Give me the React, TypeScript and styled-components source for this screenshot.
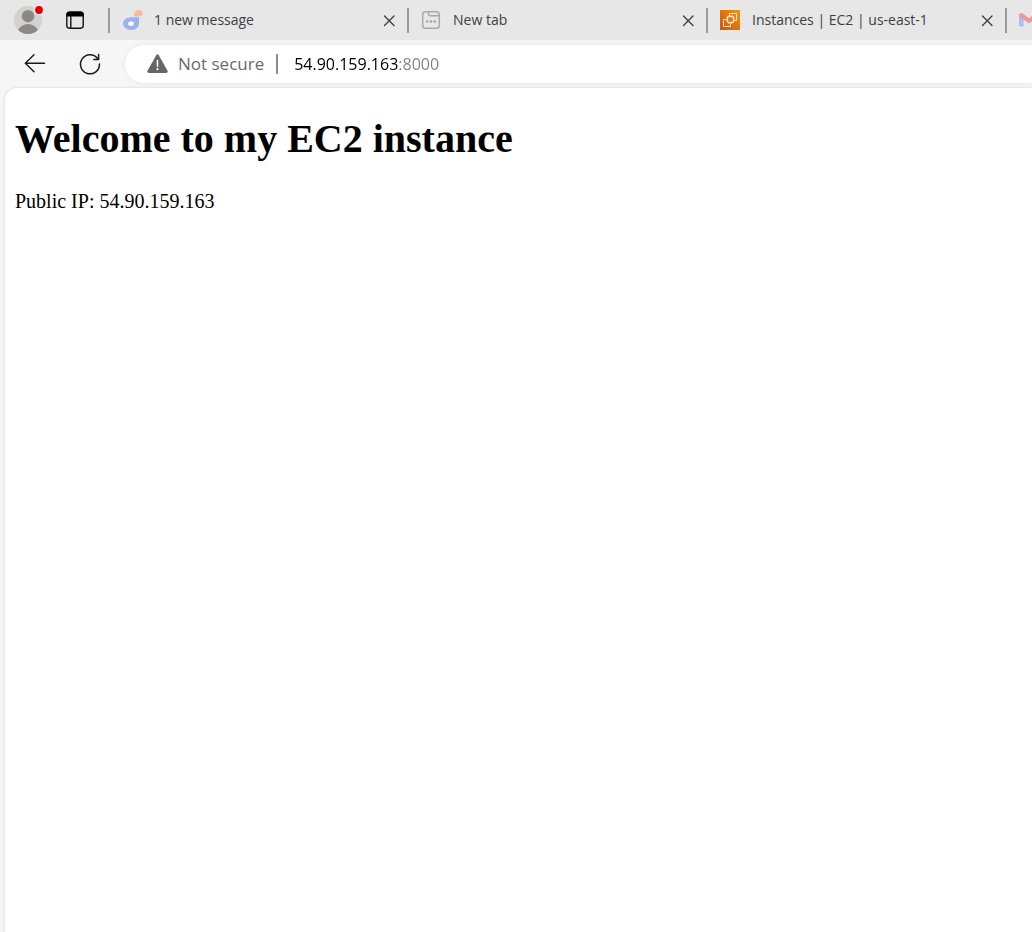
import React, { useState } from "react";
import styled, { createGlobalStyle } from "styled-components";

const uiFont = `"Open Sans", "Noto Sans", sans-serif`;

const GlobalStyle = createGlobalStyle`
  * { box-sizing: border-box; }
  body { margin: 0; background: #f6f6f6; }
`;

const Browser = styled.div`
  display: flex;
  flex-direction: column;
  min-height: 100vh;
  overflow: hidden;
  background: #f6f6f6;
  font-family: ${uiFont};
`;

const TabStrip = styled.header`
  display: flex;
  align-items: center;
  height: 40px;
  overflow: hidden;
  background: #e7e7e7;
`;

const IconButton = styled.button<{ $size?: number }>`
  display: flex;
  flex: none;
  align-items: center;
  justify-content: center;
  width: ${(p) => p.$size ?? 40}px;
  height: ${(p) => p.$size ?? 40}px;
  padding: 0;
  border: 0;
  background: transparent;
  color: #1a1a1a;
`;

const WindowButtons = styled.div`
  display: flex;
  flex: none;
  gap: 7px;
  width: 108px;
  padding-left: 8px;
`;

const Tabs = styled.nav`
  display: flex;
  flex: 1;
  min-width: 0;
  overflow: hidden;
`;

const Tab = styled.div`
  display: flex;
  flex: none;
  align-items: center;
  width: 299px;
  height: 25px;
  padding-right: 8px;
  border-left: 2px solid #9a9a9a;
`;

const TabButton = styled.button`
  display: flex;
  flex: 1;
  align-items: center;
  gap: 12px;
  min-width: 0;
  padding: 0 0 0 12px;
  border: 0;
  background: transparent;
  color: #404040;
  font-family: ${uiFont};
  font-size: 14px;
  line-height: 24px;
  text-align: left;
  white-space: nowrap;

  svg { flex: none; }
`;

const Toolbar = styled.div`
  display: flex;
  align-items: center;
  height: 48px;
  padding-left: 15px;
  gap: 15px;
`;

const AddressBar = styled.form`
  display: flex;
  flex: 1;
  align-items: center;
  min-width: 0;
  height: 38px;
  padding-left: 22px;
  border-radius: 19px 0 0 19px;
  background: #ffffff;
  box-shadow: 0 0 4px rgba(0, 0, 0, 0.08);
`;

const SecurityButton = styled.button`
  display: flex;
  flex: none;
  align-items: center;
  gap: 10px;
  padding: 0;
  border: 0;
  background: transparent;
  color: #6b6b6b;
  font-family: ${uiFont};
  font-size: 17px;
  line-height: 24px;
`;

const AddressDivider = styled.span`
  flex: none;
  width: 2px;
  height: 20px;
  margin: 0 16px 0 12px;
  background: #8c8c8c;
`;

/* The host is drawn black and the port after it grey. */
const AddressInput = styled.input`
  flex: 1;
  min-width: 0;
  height: 24px;
  padding: 0;
  border: 0;
  outline: 0;
  background: linear-gradient(90deg, #000000 105px, #808080 105px);
  background-clip: text;
  -webkit-background-clip: text;
  color: transparent;
  caret-color: #000000;
  font-family: ${uiFont};
  font-size: 16px;
  line-height: 24px;
`;

const Page = styled.main`
  flex: 1;
  margin-left: 5px;
  padding: 27px 10px;
  border-radius: 12px 0 0 0;
  background: #ffffff;
  box-shadow: 0 0 3px rgba(0, 0, 0, 0.16);
  color: #000000;
  font-family: "Liberation Serif", serif;
`;

const Title = styled.h1`
  margin: 0 0 26px;
  font-size: 40px;
  line-height: 48px;
`;

const Paragraph = styled.p`
  margin: 0;
  font-size: 20px;
  line-height: 24px;
`;

const Avatar = () => (
  <svg width="40" height="40" viewBox="8 0 40 40" aria-hidden="true">
    <defs>
      <clipPath id="avatar"><circle cx="28" cy="20" r="14" /></clipPath>
    </defs>
    <circle cx="28" cy="20" r="14" fill="#d3d1ce" />
    <g clipPath="url(#avatar)" fill="#8b8885">
      <circle cx="28" cy="16.2" r="6.2" />
      <ellipse cx="28" cy="33" rx="10.5" ry="9" />
    </g>
    <circle cx="39" cy="10" r="5" fill="#f4f1f1" />
    <circle cx="39" cy="10" r="3.9" fill="#e60000" />
  </svg>
);

const Workspaces = () => (
  <svg width="20" height="20" viewBox="0 0 20 20" aria-hidden="true">
    <rect x="1.8" y="2.2" width="16.4" height="16" rx="2.6" fill="none" stroke="#111" strokeWidth="1.4" />
    <path d="M1.5 6.5V4.3Q1.5 1.6 4.2 1.6H15.8Q18.5 1.6 18.5 4.3V6.5Z" fill="#000" />
    <path d="M5.8 6V18" stroke="#111" strokeWidth="1.4" />
  </svg>
);

const ChatLogo = () => (
  <svg width="20" height="20" viewBox="0 0 20 20" overflow="visible" aria-hidden="true">
    <g transform="translate(1 0)">
      <path fillRule="evenodd" fill="#9bb2f0" d="M8.2 7.2H16V13.2C16 17.2 12.6 20 8.2 20S0 17.2 0 13.6 3.6 7.2 8.2 7.2ZM8 11.6C6.2 11.6 5.2 12.6 5.2 13.7S6.2 15.8 8 15.8 10.7 14.8 10.7 13.7 9.8 11.6 8 11.6Z" />
      <ellipse cx="8" cy="13.7" rx="2.75" ry="2.1" fill="#fff" />
      <path fill="#f3bd98" d="M16 0C18.5 0 20 1.4 20 3.2S18.3 6.6 15.8 6.6H11.2V4.2C11.2 1.6 13.2 0 16 0Z" />
    </g>
  </svg>
);

const NewTabIcon = () => (
  <svg width="20" height="20" viewBox="0 0 20 20" fill="none" stroke="#a9a9a9" strokeWidth="1.5" aria-hidden="true">
    <rect x="1.7" y="1.7" width="16.6" height="16.6" rx="2.8" />
    <path d="M7.5 1.7V4.2Q7.5 5.7 9 5.7H18.3" />
    <g fill="#a0a0a0" stroke="none">
      <circle cx="6.2" cy="11.5" r="1.2" />
      <circle cx="10" cy="11.5" r="1.2" />
      <circle cx="13.8" cy="11.5" r="1.2" />
    </g>
  </svg>
);

const Ec2Icon = () => (
  <svg width="20" height="20" viewBox="0 0 20 20" fill="none" aria-hidden="true">
    <defs>
      <linearGradient id="ec2" x1="0" y1="1" x2="1" y2="0">
        <stop offset="0" stopColor="#cf5410" />
        <stop offset="1" stopColor="#f79400" />
      </linearGradient>
    </defs>
    <rect width="20" height="20" fill="url(#ec2)" />
    <g stroke="#ffe9cf" strokeWidth="1">
      <rect x="7.5" y="6.5" width="6" height="6" rx="1" strokeWidth="1.3" />
      <path d="M9.5 6V3.5H16.5V10.5H14M6.5 9.5H3.5V16.5H10.5V13.5" />
      <path d="M9 5.2V6.5M12 5.2V6.5M7 8H6M7 11H6M14 8H15M9 13V14M12 13V14" strokeWidth="0.7" />
    </g>
  </svg>
);

const MailIcon = () => (
  <svg width="20" height="20" viewBox="0 0 20 20" aria-hidden="true">
    <path d="M0 6 4.6 9.2V16.6H1.4Q0 16.6 0 15.2Z" fill="#a5c0f4" />
    <path d="M20 6 15.4 9.2V16.6H18.6Q20 16.6 20 15.2Z" fill="#9bd0a8" />
    <path d="M0 6.8V5.2C0 3.2 2.3 2.5 3.7 3.5L10 8.2 16.3 3.5C17.7 2.5 20 3.2 20 5.2V6.8L10 13.4 4.6 9.8V10Z" fill="#eb9c95" />
  </svg>
);

const CloseIcon = () => (
  <svg width="20" height="20" viewBox="0 0 20 20" stroke="#404040" strokeWidth="1.4" strokeLinecap="round" aria-hidden="true">
    <path d="M5.5 6 15 15.5M15 6 5.5 15.5" />
  </svg>
);

const BackIcon = () => (
  <svg width="24" height="24" viewBox="0 0 24 24" fill="none" stroke="currentColor" strokeWidth="1.4" strokeLinecap="round" strokeLinejoin="round" aria-hidden="true">
    <path d="M11 2.8 2.3 11.3 11 19.8M2.5 11.3H21.5" />
  </svg>
);

const ReloadIcon = () => (
  <svg width="24" height="24" viewBox="0 0 24 24" fill="none" stroke="currentColor" strokeWidth="1.5" strokeLinecap="round" strokeLinejoin="round" aria-hidden="true">
    <path d="M21.5 12A9.5 9.5 0 1 1 19.6 6.6M20.6 2.6V7.4H15.8" />
  </svg>
);

const WarningIcon = () => (
  <svg width="21" height="20" viewBox="0 0 21 20" aria-hidden="true">
    <path d="M9.2 1.2Q10.5-.6 11.8 1.2L20.6 17Q21.2 18.8 19.2 19H1.8Q-.2 18.8.4 17Z" fill="#666" />
    <path d="M10.5 6.6V12.2" stroke="#fff" strokeWidth="1.6" strokeLinecap="round" />
    <circle cx="10.5" cy="15.2" r="1.1" fill="#fff" />
  </svg>
);

const tabs = [
  { title: "1 new message", Icon: ChatLogo },
  { title: "New tab", Icon: NewTabIcon },
  { title: "Instances | EC2 | us-east-1", Icon: Ec2Icon },
  { title: "", Icon: MailIcon },
];

export default function App() {
  const [address, setAddress] = useState("54.90.159.163:8000");

  return (
    <Browser>
      <GlobalStyle />
      <TabStrip>
        <WindowButtons>
          <IconButton type="button" aria-label="Profile"><Avatar /></IconButton>
          <IconButton type="button" aria-label="Workspaces"><Workspaces /></IconButton>
        </WindowButtons>
        <Tabs aria-label="Open tabs">
          {tabs.map(({ title, Icon }, i) => (
            <Tab key={i}>
              <TabButton type="button" aria-label={title || "Mail"}>
                <Icon />
                {title}
              </TabButton>
              <IconButton type="button" $size={20} aria-label="Close tab"><CloseIcon /></IconButton>
            </Tab>
          ))}
        </Tabs>
      </TabStrip>
      <Toolbar>
        <IconButton type="button" aria-label="Back"><BackIcon /></IconButton>
        <IconButton type="button" aria-label="Reload"><ReloadIcon /></IconButton>
        <AddressBar onSubmit={(e) => e.preventDefault()}>
          <SecurityButton type="button"><WarningIcon />Not secure</SecurityButton>
          <AddressDivider />
          <AddressInput
            aria-label="Address"
            value={address}
            onChange={(e) => setAddress(e.target.value)}
          />
        </AddressBar>
      </Toolbar>
      <Page>
        <Title>Welcome to my EC2 instance</Title>
        <Paragraph>Public IP: 54.90.159.163</Paragraph>
      </Page>
    </Browser>
  );
}
